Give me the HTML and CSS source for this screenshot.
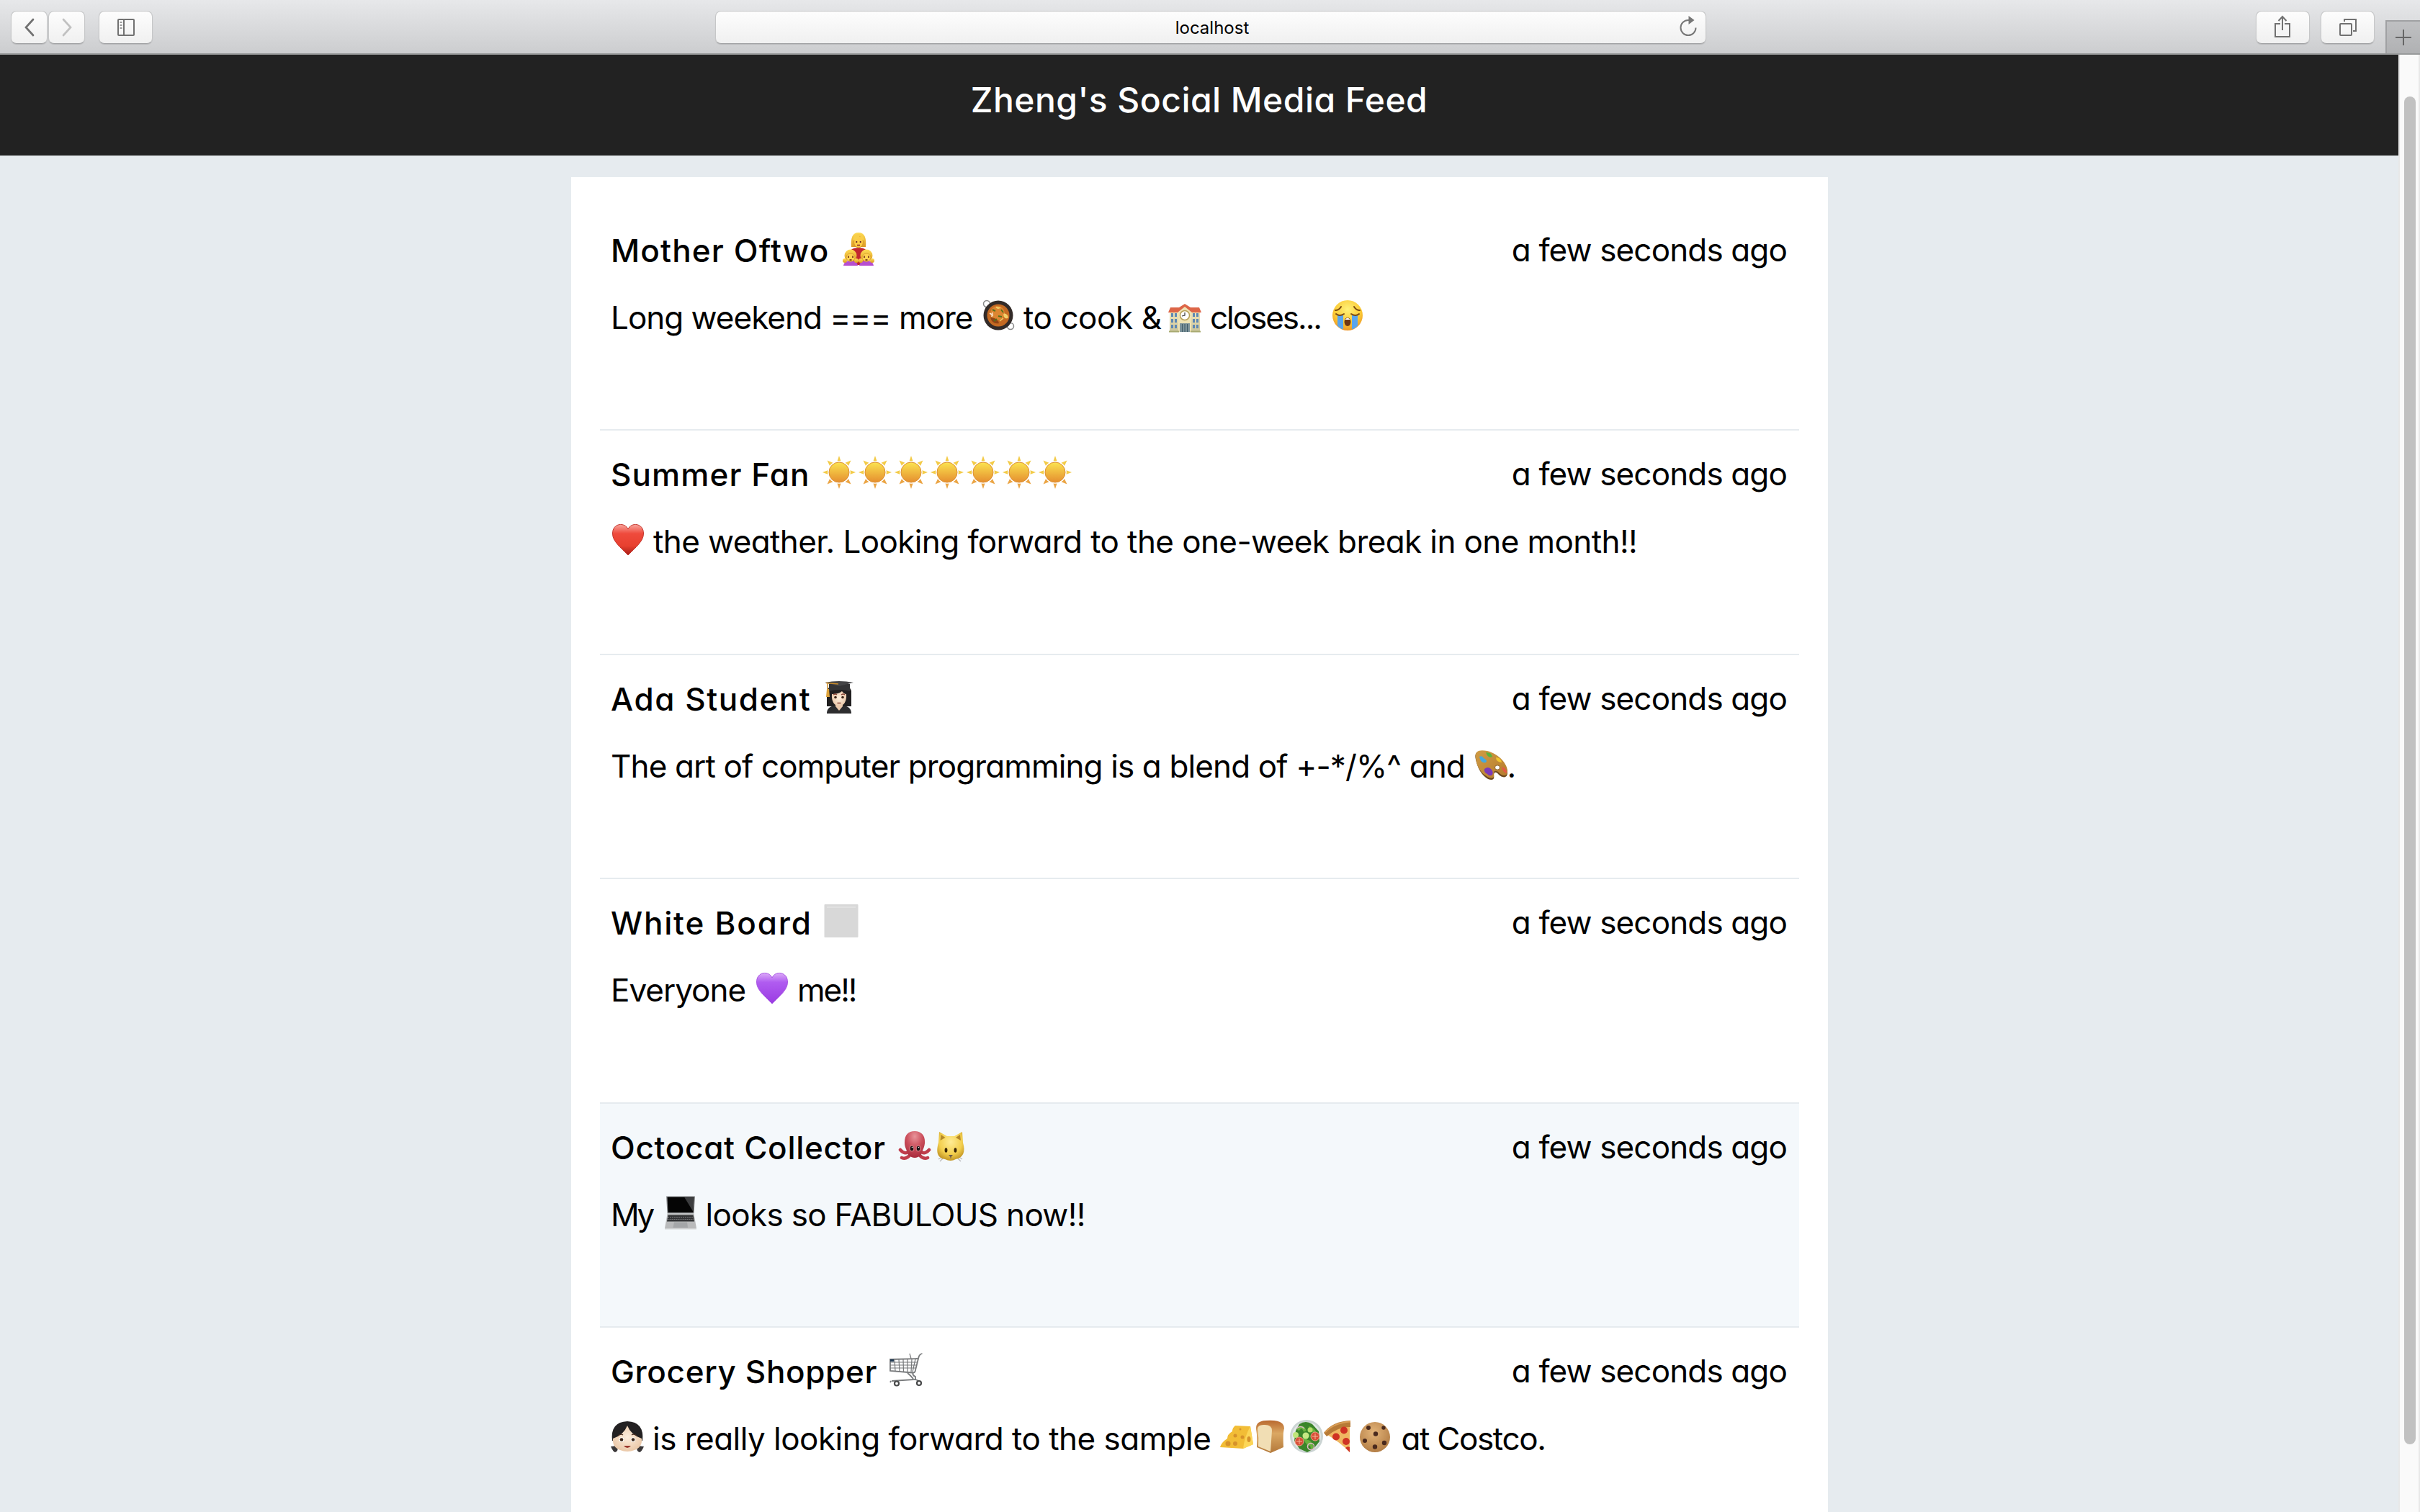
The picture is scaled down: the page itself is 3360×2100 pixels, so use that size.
FILE: index.html
```html
<!DOCTYPE html>
<html lang="en">
<head>
<meta charset="utf-8">
<title>Zheng's Social Media Feed</title>
<link rel="stylesheet" href="styles.css">
</head>
<body>
<svg class="defs" width="0" height="0" aria-hidden="true">
  <defs>
    <linearGradient id="gold" x1="0" y1="0" x2="0" y2="1"><stop offset="0" stop-color="#fbe34f"/><stop offset="1" stop-color="#e58e2f"/></linearGradient>
    <linearGradient id="hair" x1="0" y1="0" x2="0" y2="1"><stop offset="0" stop-color="#ffdc55"/><stop offset="1" stop-color="#dc9a22"/></linearGradient>
    <radialGradient id="cry" cx=".5" cy=".3" r=".75"><stop offset="0" stop-color="#fff27a"/><stop offset=".6" stop-color="#fbc934"/><stop offset="1" stop-color="#e98a26"/></radialGradient>
    <linearGradient id="red" x1="0" y1="0" x2="0" y2="1"><stop offset="0" stop-color="#f8a49c"/><stop offset=".3" stop-color="#ef4a3c"/><stop offset=".7" stop-color="#e8402f"/><stop offset="1" stop-color="#a51d16"/></linearGradient>
    <linearGradient id="purple" x1="0" y1="0" x2="0" y2="1"><stop offset="0" stop-color="#dcaaf8"/><stop offset=".3" stop-color="#b05cf0"/><stop offset="1" stop-color="#9a3be2"/></linearGradient>
    <linearGradient id="wall" x1="0" y1="0" x2="0" y2="1"><stop offset="0" stop-color="#f3e6b8"/><stop offset="1" stop-color="#c9c49c"/></linearGradient>
    <radialGradient id="skin" cx=".5" cy=".45" r=".6"><stop offset="0" stop-color="#fdeedd"/><stop offset="1" stop-color="#e9c5a4"/></radialGradient>
    <radialGradient id="octo" cx=".5" cy=".2" r=".8"><stop offset="0" stop-color="#e8949a"/><stop offset=".5" stop-color="#cb4f5c"/><stop offset="1" stop-color="#a82c3d"/></radialGradient>
    <radialGradient id="cat" cx=".5" cy=".35" r=".7"><stop offset="0" stop-color="#ffec95"/><stop offset=".6" stop-color="#f3cf4e"/><stop offset="1" stop-color="#b98a1c"/></radialGradient>
    <linearGradient id="crust" x1="0" y1="0" x2="0" y2="1"><stop offset="0" stop-color="#b9682e"/><stop offset=".4" stop-color="#dba863"/><stop offset="1" stop-color="#b3783a"/></linearGradient>
    <radialGradient id="cookie" cx=".45" cy=".35" r=".7"><stop offset="0" stop-color="#e3b479"/><stop offset="1" stop-color="#b07a42"/></radialGradient>
    <linearGradient id="wood" x1="0" y1="0" x2="1" y2="1"><stop offset="0" stop-color="#d09c45"/><stop offset="1" stop-color="#b57b2c"/></linearGradient>
    <symbol id="sun" viewBox="0 0 48 48">
      <path d="M24 1l3 9h-6zM1 24l8-3v6zM47 24l-8-3v6zM7.500 7.500l8.500 3.500-4.500 5zM40.500 7.500l-8.500 3.500 4.500 5z" fill="#f3cb48"/>
      <path d="M24 47l3-9h-6zM7.500 40.500l8.500-3.500-4.500-5zM40.500 40.500l-8.500-3.500 4.500-5z" fill="#eba545"/>
      <circle cx="24" cy="24" r="15.800" fill="#fff"/>
      <circle cx="24" cy="24" r="14" fill="url(#gold)" stroke="#dd9034"/>
    </symbol>
    <symbol id="heart" viewBox="0 0 48 48"><path d="M24 10C20 0 2.500 1 2.500 16c0 11 11 19 21.500 30C34.500 35 45.500 27 45.500 16 45.500 1 28 0 24 10z"/></symbol>
  </defs>
</svg>

<div class="toolbar">
  <div class="nav">
    <div class="btn back"><svg width="16" height="26" viewBox="0 0 16 26"><path d="M13 2 3 13l10 11" fill="none" stroke="#717171" stroke-width="2.700" stroke-linecap="round"/></svg></div>
    <div class="btn back"><svg width="16" height="26" viewBox="0 0 16 26"><path d="M3 2l10 11L3 24" fill="none" stroke="#c1c1c1" stroke-width="2.700" stroke-linecap="round"/></svg></div>
  </div>
  <div class="btn side"><svg width="32" height="26" viewBox="0 0 32 26" fill="none" stroke="#717171" stroke-width="2"><rect x="5" y="2" width="22" height="22" rx="1"/><path d="M13 2v22"/><path d="M7.500 6h3M7.500 10h3M7.500 14h3" stroke="#999"/></svg></div>
  <div class="address">
    <span class="url">localhost</span>
    <svg class="reload" width="28" height="30" viewBox="0 0 28 30"><path d="M24.500 16.500A10.500 10.500 0 1 1 14 6h3" fill="none" stroke="#777" stroke-width="2"/><path d="M14.500 0l8 6-8 6z" fill="#777"/></svg>
  </div>
  <div class="btn wide"><svg class="share" width="24" height="32" viewBox="0 0 24 32" fill="none" stroke="#717171" stroke-width="2"><path d="M9 12H2v18h20V12h-7M12 21V2M6.500 8 12 2l5.500 6"/></svg></div>
  <div class="btn wide tabs"><svg width="26" height="26" viewBox="0 0 26 26" fill="none" stroke="#717171" stroke-width="2"><rect x="2" y="8" width="16" height="16" rx="1"/><path d="M8 5V2h16v16h-4"/></svg></div>
  <div class="newtab"><svg width="22" height="22" viewBox="0 0 22 22"><path d="M11 0v22M0 11h22" stroke="#666" stroke-width="2"/></svg></div>
</div>

<div class="window">
  <div class="page">
    <header class="header"><h1>Zheng's Social Media Feed</h1></header>
    <main class="feed">

      <article class="post">
        <div class="top">
          <div class="line name"><span class="run mother">Mother Oftwo</span>
            <svg class="emoji" viewBox="0 0 48 48">
              <path d="M12 47V31q0-8 12-8t12 8v16z" fill="#c2272f"/>
              <path d="M14 22C13 10 15 2 24 2s11 8 10 20z" fill="url(#hair)"/>
              <ellipse cx="24" cy="15" rx="6.500" ry="8" fill="#fccb45" stroke="#cf8f22" stroke-width=".8"/><path d="M16 13q9-1 10-7 1 6 6 7-1-9-8-9t-8 9z" fill="#f8cf4a"/>
              <circle cx="21.300" cy="15" r="1.100" fill="#512"/><circle cx="26.700" cy="15" r="1.100" fill="#512"/><path d="M22 19.500h4" stroke="#822" stroke-width="1.500"/>
              <path d="M3 48q1-7 10-7t10 7zM25 48q1-7 10-7t10 7z" fill="#b64fd0"/>
              <g fill="url(#hair)"><circle cx="13" cy="34" r="8.500"/><circle cx="35" cy="34" r="8.500"/><circle cx="5" cy="41" r="3"/><circle cx="21" cy="41" r="3"/><circle cx="27" cy="41" r="3"/><circle cx="43" cy="41" r="3"/></g>
              <g fill="#ffd150" stroke="#d09526" stroke-width=".7"><ellipse cx="13" cy="36.500" rx="6" ry="5.500"/><ellipse cx="35" cy="36.500" rx="6" ry="5.500"/></g>
              <path d="M10 34.500v2.500M16 34.500v2.500M32 34.500v2.500M38 34.500v2.500M11.500 40h3M33.500 40h3" stroke="#602010" stroke-width="1.500"/>
            </svg>
          </div>
          <time class="time">a few seconds ago</time>
        </div>
        <div class="line">
          <span class="run long">Long weekend === more</span>
          <svg class="emoji" viewBox="0 0 48 48">
            <circle cx="8" cy="8" r="4.500" fill="none" stroke="#888" stroke-width="1.500"/><circle cx="41" cy="39" r="4.500" fill="none" stroke="#888" stroke-width="1.500"/>
            <circle cx="24" cy="24" r="20.500" fill="#332b28"/><circle cx="24" cy="24" r="15.500" fill="#c56a22"/><circle cx="23" cy="21" r="10" fill="#dc8632"/>
            <path d="M13 27q3 10 12 8-2-8-12-8z" fill="#8f4516"/><path d="M21 12q2 4 6 1M32 22q5 1 5 5-5 2-5-5M26 32l5-4" fill="#f3d06a" stroke="#f3d06a" stroke-width="1.500"/>
            <path d="M16 16l4 2M28 16l3 4M24 25l5 1M18 32l4-3" stroke="#57701c" stroke-width="2"/><path d="M12 21l5 3M16 20l-1 6" stroke="#f6e5d1" stroke-width="1.500"/>
          </svg>
          <span class="run after cook">to cook &amp;</span>
          <svg class="emoji" viewBox="0 0 48 48">
            <path d="M3 19h42v28H3z" fill="url(#wall)"/><path d="M15 17l9-7 9 7v30H15z" fill="#efe3b4"/>
            <path d="M1 20l3-7h12l8-5 8 5h12l3 7H34l-10-8-10 8z" fill="#dd6547"/>
            <circle cx="24" cy="24" r="6.500" fill="#fff" stroke="#b79f55" stroke-width="1.500"/><path d="M24 20v4l-4 1" fill="none" stroke="#333" stroke-width="1.200"/>
            <path d="M5 21h3v5H5zM10 21h3v5h-3zM5 29h3v5H5zM10 29h3v5h-3zM5 37h3v5H5zM10 37h3v5h-3zM35 21h3v5h-3zM40 21h3v5h-3zM35 29h3v5h-3zM40 29h3v5h-3zM35 37h3v5h-3zM40 37h3v5h-3z" fill="#5d88b4"/>
            <path d="M17 35h14v12H17z" fill="#7c9299"/><path d="M20.500 36v11M24 36v11M27.500 36v11" stroke="#3c5865"/>
            <path d="M2 46.500h14M32 46.500h14" stroke="#a8aa71" stroke-width="2"/>
          </svg>
          <span class="run after closes">closes...</span>
          <svg class="emoji" viewBox="0 0 48 48">
            <circle cx="24" cy="24" r="21" fill="url(#cry)"/>
            <path d="M10 24h8v19.500q-5-1.500-8-5zM30 24h8v14.500q-3 3.500-8 5z" fill="#58a5ef"/>
            <path d="M8 22q5 4 11 0M29 22q6 4 11 0M7 17q5 0 8-5M41 17q-5 0-8-5" fill="none" stroke="#7b4b12" stroke-width="2" stroke-linecap="round"/>
            <ellipse cx="24" cy="33" rx="4.500" ry="6" fill="#6f3512"/><path d="M20.500 30q3.500-5 7 0z" fill="#fff"/>
          </svg>
        </div>
      </article>

      <article class="post">
        <div class="top">
          <div class="line name"><span class="run summer">Summer Fan</span>
            <svg class="emoji sun"><use href="#sun"/></svg><svg class="emoji sun"><use href="#sun"/></svg><svg class="emoji sun"><use href="#sun"/></svg><svg class="emoji sun"><use href="#sun"/></svg><svg class="emoji sun"><use href="#sun"/></svg><svg class="emoji sun"><use href="#sun"/></svg><svg class="emoji sun"><use href="#sun"/></svg>
          </div>
          <time class="time">a few seconds ago</time>
        </div>
        <div class="line">
          <svg class="emoji lead" fill="url(#red)" stroke="#c4342b"><use href="#heart"/></svg>
          <span class="run after weather">the weather. Looking forward to the one-week break in one month!!</span>
        </div>
      </article>

      <article class="post">
        <div class="top">
          <div class="line name"><span class="run ada">Ada Student</span>
            <svg class="emoji" viewBox="0 0 48 48">
              <path d="M7 37V16q1-8 17-8t17 8v21z" fill="#211f20"/>
              <path d="M7 47q0-10 12-11h10q12 1 12 11z" fill="#2d2d2f"/><path d="M19 34h10v3l-5 6-5-6z" fill="#ecc9ab"/>
              <path d="M14 20q10 0 14-4 3 4 6 4 1 15-10 17-11-2-10-17z" fill="url(#skin)"/>
              <circle cx="19" cy="24.500" r="1.800" fill="#3a2315"/><circle cx="29" cy="24.500" r="1.800" fill="#3a2315"/><path d="M16 21q3-2 5 0M27 21q3-2 5 0M21.500 32.500h5" fill="none" stroke="#8c493c" stroke-width="1.300"/>
              <path d="M10 6h29v10q-15-4-29 0z" fill="#333335"/><path d="M4 4q20-4 40 0L24 9z" fill="#444446"/>
              <path d="M6 4.500 23 6M8 5v10" stroke="#c88b2b" stroke-width="1.500"/><path d="M7 13h3l1 11H6z" fill="#dda23a"/>
            </svg>
          </div>
          <time class="time">a few seconds ago</time>
        </div>
        <div class="line">
          <span class="run art">The art of computer programming is a blend of +-*/%^ and</span>
          <svg class="emoji" viewBox="0 0 48 48">
            <path d="M2 18C-1 6 7 5 18 8c16 3 28 18 28 28 0 9-8 7-12 3-4-5-7-4-7 1 2 8-6 7-11 3C8 37 4 27 2 18z" fill="#6d481d"/>
            <path d="M2 16C0 5 8 4 18 6c16 4 28 18 28 28 0 8-7 7-11 3-4-5-9-4-8 1 2 7-5 7-10 3C8 36 3 26 2 16z" fill="url(#wood)"/>
            <ellipse cx="32" cy="29" rx="3.500" ry="3.200" fill="#fff" stroke="#875719"/>
            <path d="M7 14q4-2 6 2 6 3 3 6-7 2-9-8z" fill="#46a9dc"/><path d="M16 8q8 0 9 6-6 3-9-6z" fill="#58b33d"/><path d="M30 15q7 0 8 7-8-1-8-7z" fill="#f2c62f"/><path d="M38 28q7 2 7 9-6-2-7-9z" fill="#e65747"/><path d="M14 31q5-4 9 0 4 4 2 8-4 3-7-1-5-2-4-7z" fill="#7b3ab8"/>
          </svg>
          <span class="run dot">.</span>
        </div>
      </article>

      <article class="post">
        <div class="top">
          <div class="line name"><span class="run board">White Board</span>
            <svg class="emoji" viewBox="0 0 48 48"><rect x=".5" y="1" width="47" height="46" rx="1" fill="#d8d8d8"/><path d="M4 5h40" stroke="#e1e1e1" stroke-width="2"/></svg>
          </div>
          <time class="time">a few seconds ago</time>
        </div>
        <div class="line">
          <span class="run everyone">Everyone</span>
          <svg class="emoji" fill="url(#purple)" stroke="#a957e4"><use href="#heart"/></svg>
          <span class="run after me">me!!</span>
        </div>
      </article>

      <article class="post active">
        <div class="top">
          <div class="line name"><span class="run octocat">Octocat Collector</span>
            <svg class="emoji" viewBox="0 0 48 48">
              <g fill="none" stroke="#c03c4b" stroke-width="4.500" stroke-linecap="round"><path d="M17 31q-6 7-13-1M19 35q-6 9-13 6M31 31q6 7 13-1M29 35q6 9 13 6"/></g>
              <path d="M10 20C10 9 15 4 24 4s15 6 14 17c-1 8-4 10-5 16q-9 8-18 0c-1-6-5-9-5-17z" fill="url(#octo)"/>
              <ellipse cx="20" cy="28" rx="3.500" ry="4.500" fill="#d2737b"/><ellipse cx="29" cy="28" rx="3.500" ry="4.500" fill="#d2737b"/>
              <ellipse cx="20" cy="28" rx="2.200" ry="3.300" fill="#1a1113"/><ellipse cx="29" cy="28" rx="2.200" ry="3.300" fill="#1a1113"/><circle cx="20.500" cy="26.500" r=".8" fill="#fff"/><circle cx="29.500" cy="26.500" r=".8" fill="#fff"/>
            </svg>
            <svg class="emoji" viewBox="0 0 48 48">
              <path d="M9 43l6-4M11 46l5-5M42 43l-6-4M40 46l-5-5" stroke="#bbb" stroke-width="1.300"/>
              <path d="M9 20 10 5l11 6h10l11-6 1 15c4 13 0 21-10 23q-7 4-15 0C6 41 6 31 9 20z" fill="url(#cat)"/>
              <path d="M11.500 17l1-8 6 4zM40 17l-1-8-6 4z" fill="#b58828"/>
              <ellipse cx="19.500" cy="30.500" rx="1.900" ry="3.200" fill="#3a2506"/><ellipse cx="32.500" cy="30.500" rx="1.900" ry="3.200" fill="#3a2506"/>
              <path d="M23 37h6l-3 3.500z" fill="#6b5a4c"/><path d="M26 40v2" stroke="#6b5a4c"/>
            </svg>
          </div>
          <time class="time">a few seconds ago</time>
        </div>
        <div class="line">
          <span class="run my">My</span>
          <svg class="emoji" viewBox="0 0 48 48">
            <path d="M4 1.500h40l-1.500 24h-37z" fill="#8d8f91"/><path d="M5.500 2.500h37L41.500 24h-35z" fill="#050505"/><path d="M29 2.500h13.500L41.500 23z" fill="#3c3d3f"/>
            <path d="M5.500 26h37L46 46H2z" fill="#b9babb"/><path d="M6.500 27.500h35l1.500 9H5z" fill="#333436"/><path d="M6 30.500h36M5.500 33.500h37" stroke="#8b8c8d" stroke-width=".8" stroke-dasharray="2 1"/>
            <path d="M15 37.500h18l1 7.500H13.500z" fill="#a4a6a8"/><path d="M2 46h44v1.500H2z" fill="#d4d5d6"/>
          </svg>
          <span class="run after looks">looks so FABULOUS now!!</span>
        </div>
      </article>

      <article class="post">
        <div class="top">
          <div class="line name"><span class="run grocery">Grocery Shopper</span>
            <svg class="emoji" viewBox="0 0 48 48" fill="none" stroke="#77797b">
              <path d="M46.500 2q-4 1-5 5l-5 20q-1 2-4 1.500L2 26V10l38-1" stroke-width="1.800"/>
              <path d="M2 14h37M2 18h36M2 22h35M8 10l1 16M14 10l1 17M20 10l.5 17M26 9.500v18M32 9.500l-1 18M37 9.500l-4 18M29 2l2 7" stroke-width="1.200"/>
              <path d="M26 29q4 3 8 8M34 28q-2 4 3 6v4L4 40M3 40l-1 2M37 38l5 2" stroke-width="1.800"/><path d="M2 10h5v3H2z" fill="#203a54" stroke="none"/>
              <circle cx="11" cy="43.500" r="3" stroke="#48494a" stroke-width="2.200"/><circle cx="42" cy="43" r="3" stroke="#48494a" stroke-width="2.200"/>
            </svg>
          </div>
          <time class="time">a few seconds ago</time>
        </div>
        <div class="line">
          <svg class="emoji" viewBox="0 0 48 48">
            <path d="M3 30Q0 4 24 3q24 1 21 27z" fill="#232122"/>
            <path d="M1 38q5 0 8-2 4 8-2 10-3-1-6-8zM47 38q-5 0-8-2-4 8 2 10 3-1 6-8z" fill="#3b3839"/>
            <path d="M4 27Q19 22 24 9q5 13 20 18 1 12-10 16-10 4-20 0Q3 39 4 27z" fill="url(#skin)"/>
            <circle cx="16" cy="28.500" r="3.200" fill="#fff"/><circle cx="32" cy="28.500" r="3.200" fill="#fff"/><circle cx="16" cy="28.500" r="2.300" fill="#3b2416"/><circle cx="32" cy="28.500" r="2.300" fill="#3b2416"/>
            <path d="M11 23q4-3 7-1M37 23q-4-3-7-1" fill="none" stroke="#4b3123" stroke-width="1.300"/><path d="M19 37h10q-5 6-10 0z" fill="#9b382d"/>
          </svg>
          <span class="run after really">is really looking forward to the sample</span>
          <div class="foods">
            <svg class="emoji" viewBox="0 0 48 48">
              <path d="M22 9l21 1 4 25-14 6L1 39q2-7 10-12 0-6 7-10 0-5 4-8z" fill="#f2bd36"/><path d="M43 10l4 25-14 6q2-17 10-31z" fill="#fcd657"/>
              <g fill="#d6922a"><circle cx="12" cy="34" r="3.500"/><circle cx="22" cy="34" r="3"/><circle cx="22" cy="23" r="2.500"/><circle cx="32" cy="25" r="2.500"/><circle cx="29" cy="14" r="1.500"/><ellipse cx="41" cy="28" rx="2.500" ry="4"/></g>
            </svg>
            <svg class="emoji" viewBox="0 0 48 48">
              <path d="M3 14Q2 3 16 2q26-2 26 11-2 6-1 26l-18 8-19-8q1-15-1-25z" fill="url(#crust)"/>
              <path d="M5 14q0-6 8-6 12-1 12 8l-2 29-17-7q1-12-1-24z" fill="#f1deb4"/>
            </svg>
            <svg class="emoji" viewBox="0 0 48 48">
              <circle cx="24" cy="24" r="23" fill="#cbd4d3"/><circle cx="24" cy="24" r="20" fill="#e3e9e7"/>
              <path d="M14 7q9-6 18 0l9 10 1 14-8 10-9 5-11-5-7-11 2-14z" fill="#3b852a"/>
              <path d="M12 15q6-8 10 2M27 12q10 3 8 11M22 31q8-2 10 10M20 25l8 12" fill="none" stroke="#69b23e" stroke-width="4"/>
              <circle cx="9" cy="22" r="4" fill="#bfe67c"/><circle cx="23" cy="23" r="4.500" fill="#c6e884"/><circle cx="29" cy="15" r="3.500" fill="#b7de6d"/>
              <g fill="#d84f38" stroke="#f1a087" stroke-width="1"><circle cx="14" cy="31" r="6"/><circle cx="36" cy="24" r="6"/></g><path d="M14 27v8M10 31h8M36 20v8M32 24h8" stroke="#f5b594"/>
              <g fill="none" stroke="#e3b8ca" stroke-width="1.500"><path d="M10 13q6-5 11 0"/><circle cx="30" cy="38" r="4.500"/></g>
            </svg>
            <svg class="emoji" viewBox="0 0 48 48">
              <path d="M2 20 36 4v42Q24 33 2 20z" fill="#efb761"/><path d="M0 19Q12 3 37 2v9Q20 10 4 24z" fill="#b77b37"/><path d="M2 18Q14 5 37 3.500" fill="none" stroke="#d99d55" stroke-width="2"/>
              <g fill="#cf3323"><circle cx="17" cy="24.500" r="5"/><circle cx="28" cy="15.500" r="5"/><circle cx="31" cy="31" r="5"/><path d="M30 40q3-3 6-1v7z"/></g>
            </svg>
            <svg class="emoji" viewBox="0 0 48 48">
              <circle cx="22" cy="25" r="21" fill="url(#cookie)"/>
              <g fill="#4a2a1e"><circle cx="13" cy="12" r="3"/><circle cx="34" cy="12" r="2.700"/><circle cx="23" cy="20.500" r="3.200"/><circle cx="8" cy="30" r="3"/><circle cx="35" cy="33" r="3.200"/><circle cx="22" cy="38.500" r="3.200"/></g>
            </svg>
          </div>
          <span class="run after costco">at Costco.</span>
        </div>
      </article>
    </main>
  </div>
  <div class="scrollbar"><div class="thumb"></div></div>
</div>
</body>
</html>
```

FILE: styles.css
```css
* { box-sizing: border-box; }

body {
  margin: 0;
  width: 3360px;
  height: 2100px;
  overflow: hidden;
  background: #e6ebef;
  color: #000;
  font-family: Inter, sans-serif;
}

svg { display: block; flex: none; }
.defs { position: absolute; }

/* Browser toolbar */
.toolbar {
  display: flex;
  align-items: flex-start;
  height: 76px;
  padding: 15px 0 0 15px;
  background: linear-gradient(#e7e8ea, #cccdcf);
  border-bottom: 2px solid #999b9b;
}
.nav { display: flex; gap: 1px; }
.btn, .address {
  display: flex;
  align-items: center;
  justify-content: center;
  height: 46px;
  border: 1px solid #c6c7c8;
  border-bottom-color: #a0a1a3;
  border-radius: 8px;
  background: linear-gradient(#fdfdfd, #f0f0f0);
  box-shadow: 0 1px 1px rgba(0, 0, 0, .12);
}
.back { width: 51px; }
.side { width: 75px; margin-left: 19px; }
.wide { width: 75px; margin-left: 763px; }
.tabs { margin-left: 15px; }
.share { margin: -2px 2px 0 0; }
.address {
  width: 1376px;
  margin-left: 781px;
  padding: 0 10px 0 0;
}
.url {
  flex: 1;
  padding: 2px 0 0 42px;
  text-align: center;
  font-size: 24px;
  line-height: 44px;
}
.reload { margin-top: -3px; }
.newtab {
  display: flex;
  align-items: center;
  justify-content: center;
  flex: 1;
  height: 46px;
  margin: 13px 0 0 15px;
  border: 2px solid #a0a1a3;
  border-width: 2px 0 0 2px;
  background: linear-gradient(#bfc0c2, #b0b1b3);
}

/* Page area */
.window { display: flex; height: 2024px; overflow: hidden; }
.page { width: 3330px; overflow: hidden; font-feature-settings: "cv11"; }
.header {
  height: 140px;
  padding-top: 33px;
  background: #222;
  color: #fff;
  text-align: center;
}
h1 {
  margin: 0;
  font-size: 48px;
  font-weight: 540;
  line-height: 60px;
  letter-spacing: .45px;
}
.scrollbar {
  width: 30px;
  padding: 58px 0 0 6px;
  border: 2px solid #e8e8e8;
  border-width: 0 2px;
  background: #fafafa;
}
.thumb { width: 16px; height: 1872px; border-radius: 8px; background: #c1c1c1; }

/* Feed */
.feed {
  width: 1745px;
  margin: 30px 0 0 793px;
  padding: 38.5px 40px 0;
  background: #fff;
}
.post {
  height: 311.5px;
  padding: 34px 14px 0;
  border-top: 2px solid #e6ebef;
}
.post:first-child { border-top-color: transparent; }
.active { background: #f4f8fb; }
.top { display: flex; justify-content: space-between; margin-bottom: 39px; }
.line {
  display: flex;
  align-items: flex-start;
  font-size: 44px;
  line-height: 54px;
}
.name { font-weight: 550; }
.time {
  margin: -1px 3px 0 0;
  font-size: 44px;
  line-height: 54px;
  letter-spacing: -.86px;
}
.run { flex: none; white-space: nowrap; text-indent: 1px; }
.after { padding-left: 10px; }
.emoji { width: 48px; height: 48px; }
.sun { width: 50px; }
.lead { margin-left: 1px; }
.foods { display: flex; gap: .5px; }

/* Text run measures */
.mother { width: 321px; letter-spacing: 1.15px; }
.long { width: 515px; letter-spacing: -1px; }
.cook { width: 211px; letter-spacing: -.44px; }
.closes { width: 178px; letter-spacing: -2.04px; }
.summer { width: 292.5px; letter-spacing: 1.1px; }
.weather { letter-spacing: -.6px; }
.ada { width: 294px; letter-spacing: 1.55px; }
.art { width: 1199.5px; letter-spacing: -.87px; }
.dot { margin-left: -3px; }
.board { width: 296.5px; letter-spacing: 1.8px; }
.everyone { width: 201px; letter-spacing: -1px; }
.me { letter-spacing: -2px; }
.octocat { width: 398.5px; letter-spacing: .7px; }
.my { width: 73.5px; letter-spacing: -3.5px; }
.looks { letter-spacing: -.67px; }
.grocery { width: 386.5px; letter-spacing: .65px; }
.really { width: 797.5px; letter-spacing: -.52px; }
.costco { letter-spacing: -1.35px; }
```
